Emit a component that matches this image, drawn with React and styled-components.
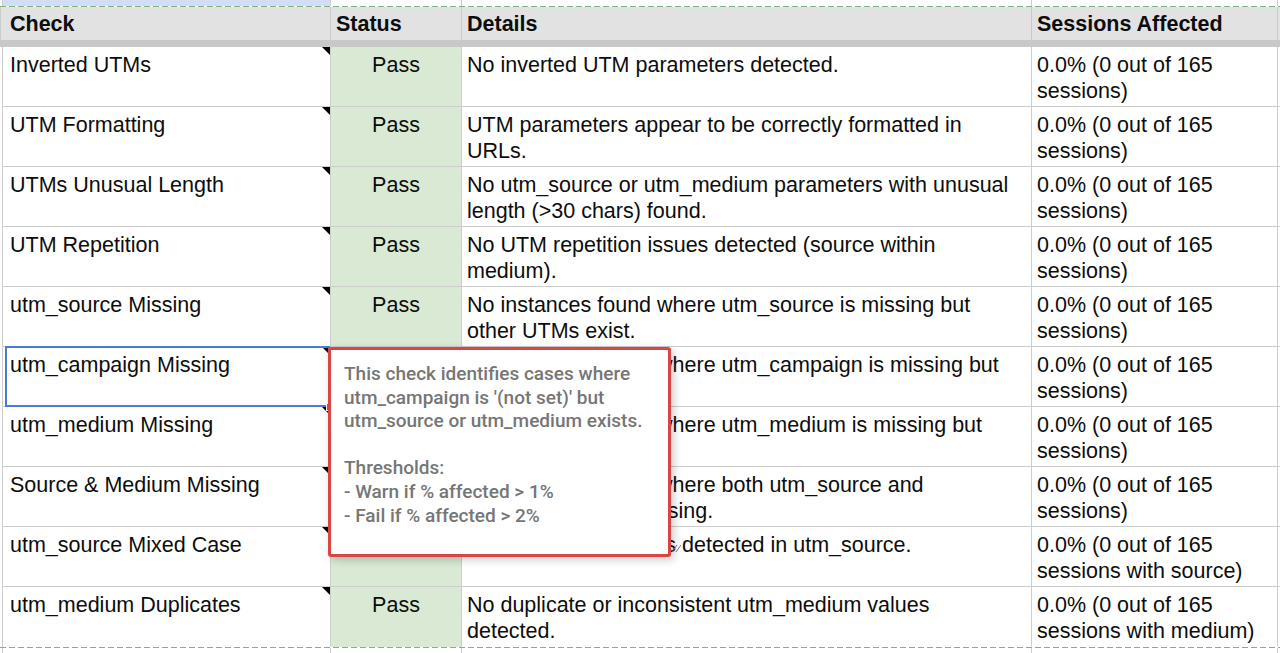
import React from 'react';
import styled, { createGlobalStyle, css } from 'styled-components';

const GlobalStyle = createGlobalStyle`
  html, body {
    margin: 0;
    padding: 0;
    background: #fff;
    overflow: hidden;
  }
  body {
    font-family: "Liberation Sans", Arial, sans-serif;
  }
`;

const columns = '328px 131px 570px 246px 1fr';
const gridLine = '#cdcdcd';

const rows = [
  {
    check: 'Inverted UTMs',
    details: 'No inverted UTM parameters detected.',
    sessions: '0.0% (0 out of 165\nsessions)',
  },
  {
    check: 'UTM Formatting',
    details: 'UTM parameters appear to be correctly formatted in\nURLs.',
    sessions: '0.0% (0 out of 165\nsessions)',
  },
  {
    check: 'UTMs Unusual Length',
    details: 'No utm_source or utm_medium parameters with unusual\nlength (>30 chars) found.',
    sessions: '0.0% (0 out of 165\nsessions)',
  },
  {
    check: 'UTM Repetition',
    details: 'No UTM repetition issues detected (source within\nmedium).',
    sessions: '0.0% (0 out of 165\nsessions)',
  },
  {
    check: 'utm_source Missing',
    details: 'No instances found where utm_source is missing but\nother UTMs exist.',
    sessions: '0.0% (0 out of 165\nsessions)',
  },
  {
    check: 'utm_campaign Missing',
    details: 'No instances found where utm_campaign is missing but\nother UTMs exist.',
    sessions: '0.0% (0 out of 165\nsessions)',
    selected: true,
  },
  {
    check: 'utm_medium Missing',
    details: 'No instances found where utm_medium is missing but\nother UTMs exist.',
    sessions: '0.0% (0 out of 165\nsessions)',
  },
  {
    check: 'Source & Medium Missing',
    details: 'No instances found where both utm_source and\nutm_medium are missing.',
    sessions: '0.0% (0 out of 165\nsessions)',
  },
  {
    check: 'utm_source Mixed Case',
    details: 'No mixed case issues detected in utm_source.',
    sessions: '0.0% (0 out of 165\nsessions with source)',
  },
  {
    check: 'utm_medium Duplicates',
    details: 'No duplicate or inconsistent utm_medium values\ndetected.',
    sessions: '0.0% (0 out of 165\nsessions with medium)',
  },
];

const noteText = `This check identifies cases where
utm_campaign is '(not set)' but
utm_source or utm_medium exists.

Thresholds:
- Warn if % affected > 1%
- Fail if % affected > 2%`;

const App = () => {
  return (
    <>
      <GlobalStyle />
      <Sheet>
        <StripRow>
          <StripCell highlighted />
          <StripCell />
          <StripCell />
          <StripCell />
          <StripCell last />
        </StripRow>
        <DashLine />
        <HeaderRow>
          <HeaderCell>Check</HeaderCell>
          <HeaderCell>Status</HeaderCell>
          <HeaderCell>Details</HeaderCell>
          <HeaderCell>Sessions Affected</HeaderCell>
          <HeaderCell last />
        </HeaderRow>
        <FrozenDivider />
        {rows.map((row, i) => (
          <DataRow key={row.check} lastRow={i === rows.length - 1}>
            <CheckCell selected={row.selected}>
              {row.check}
              {row.selected && <FillHandle />}
            </CheckCell>
            <StatusCell>Pass</StatusCell>
            <TextCell>{row.details}</TextCell>
            <TextCell>{row.sessions}</TextCell>
            <TextCell last />
          </DataRow>
        ))}
        <DashLine />
        <StripRow>
          <StripCell />
          <StripCell />
          <StripCell />
          <StripCell />
          <StripCell last />
        </StripRow>

        <Note>
          <NoteText>{noteText}</NoteText>
        </Note>
        <NoteGrip viewBox="0 0 10 12">
          <line x1="1" y1="11" x2="6" y2="4" />
          <line x1="5" y1="11" x2="10" y2="4" />
        </NoteGrip>
      </Sheet>
    </>
  );
};

const Sheet = styled.div`
  position: relative;
  width: 1280px;
  height: 653px;
  overflow: hidden;
  padding-left: 2px;
  box-sizing: border-box;
  display: flex;
  flex-direction: column;
`;

const Row = styled.div`
  display: grid;
  grid-template-columns: ${columns};
  border-left: 1px solid ${gridLine};
`;

const StripRow = styled(Row)`
  height: 6px;
  flex: 1 0 6px;
`;

const StripCell = styled.div`
  border-right: 1px solid ${gridLine};
  background: ${({ highlighted }) => (highlighted ? '#d2def5' : '#fff')};
  ${({ last }) => last && css`border-right: none;`}
`;

const DashLine = styled.div`
  height: 1px;
  flex: 0 0 1px;
  margin-left: -2px;
  background: repeating-linear-gradient(
    to right,
    #7fb47f 0 6px,
    transparent 6px 9px
  );
`;

const HeaderRow = styled(Row)`
  height: 33px;
  flex: 0 0 33px;
  background: #e2e2e2;
  margin-left: -2px;
  padding-left: 2px;
`;

const HeaderCell = styled.div`
  display: flex;
  align-items: center;
  padding: 2px 7px 0;
  font-weight: bold;
  font-size: 21.5px;
  color: #0d0d0d;
  border-right: 1px solid #cacaca;
  & + & {
    padding-left: 5px;
  }
  ${({ last }) => last && css`border-right: none;`}
`;

const FrozenDivider = styled.div`
  height: 7px;
  flex: 0 0 7px;
  margin-left: -2px;
  background: #c8c8c8;
`;

const DataRow = styled(Row)`
  height: 60px;
  flex: 0 0 60px;
  & > div {
    border-bottom: 1px solid ${({ lastRow }) => (lastRow ? 'transparent' : gridLine)};
  }
`;

const cellBase = css`
  position: relative;
  box-sizing: border-box;
  font-size: 21.5px;
  line-height: 26px;
  color: #0d0d0d;
  padding: 5px 5px 0;
  border-right: 1px solid ${gridLine};
  white-space: pre-line;
`;

const CheckCell = styled.div`
  ${cellBase};
  padding-left: 7px;

  &::after {
    content: '';
    position: absolute;
    top: 0;
    right: 0;
    border-top: 8px solid #000;
    border-left: 8px solid transparent;
  }

  ${({ selected }) =>
    selected &&
    css`
      &::before {
        content: '';
        position: absolute;
        top: -1px;
        left: 2px;
        right: 0;
        bottom: -1px;
        border: 2px solid #4a7bd4;
        z-index: 1;
      }
    `}
`;

const FillHandle = styled.span`
  position: absolute;
  right: -4px;
  bottom: -5px;
  width: 6px;
  height: 6px;
  background: #4a7bd4;
  border: 1px solid #fff;
  z-index: 2;
`;

const StatusCell = styled.div`
  ${cellBase};
  background: #d9e9d3;
  text-align: center;
`;

const TextCell = styled.div`
  ${cellBase};
  ${({ last }) => last && css`border-right: none;`}
`;

const Note = styled.div`
  position: absolute;
  left: 328px;
  top: 347px;
  width: 343px;
  height: 210px;
  box-sizing: border-box;
  background: #fff;
  border: 3px solid #d94545;
  border-radius: 3px;
  box-shadow: 3px 3px 9px rgba(0, 0, 0, 0.2);
  padding: 12px 10px 0 13px;
  z-index: 5;
`;

const NoteText = styled.div`
  font-family: Roboto, "Liberation Sans", Arial, sans-serif;
  font-size: 19px;
  font-weight: 500;
  line-height: 23.6px;
  color: #767676;
  white-space: pre;
`;

const NoteGrip = styled.svg`
  position: absolute;
  left: 671px;
  top: 541px;
  width: 10px;
  height: 12px;
  z-index: 4;
  stroke: #777;
  stroke-width: 1;
  fill: none;
`;

export default App;
